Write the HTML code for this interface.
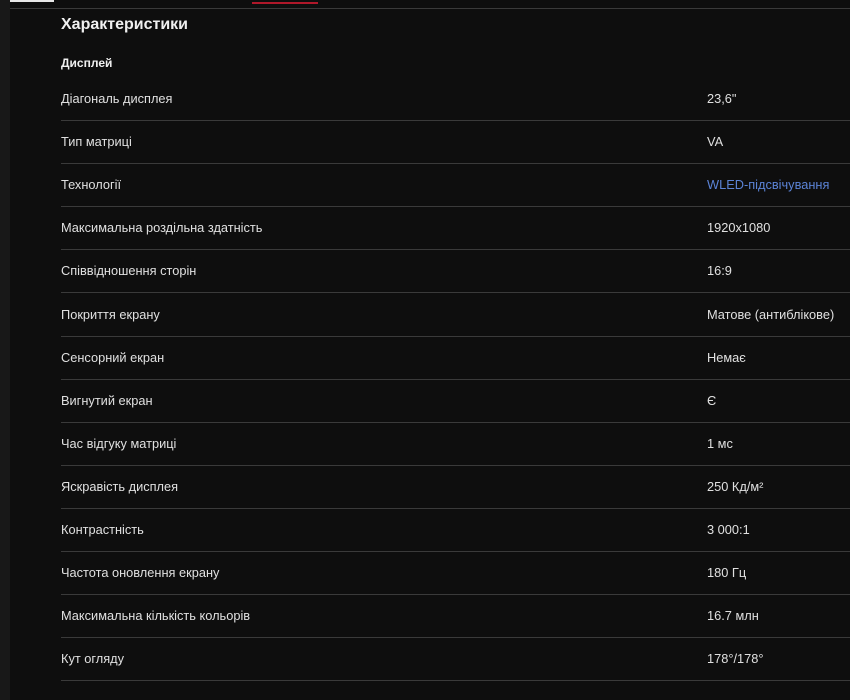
<!DOCTYPE html>
<html><head><meta charset="utf-8"><style>
body{margin:0;width:850px;height:700px;background:#0e0e0e;overflow:hidden;font-family:"Liberation Sans",Arial,sans-serif;color:#e0e0e0;position:relative}
.strip{position:absolute;left:0;top:0;width:10px;height:700px;background:#181818}
.top{position:absolute;left:10px;right:0;top:8px;height:1px;background:#3a3a3a}
.wb{position:absolute;left:10px;top:0;width:44px;height:2px;background:#e8e8e8}
.rb{position:absolute;left:252px;top:2px;width:66px;height:2px;background:#b0182a}
h2{position:absolute;left:61px;top:16px;margin:0;font-size:16px;font-weight:bold;color:#f0f0f0}
.sub{position:absolute;left:61px;top:56px;font-size:12px;font-weight:bold;color:#f0f0f0}
.row{position:absolute;left:61px;right:0;height:43px;border-bottom:1px solid #3a3a3a;font-size:12.8px}
.row span{position:absolute;top:14px}
.row .v{left:646px}
a{color:#5b83d6;text-decoration:none}
</style></head><body>
<div class="strip"></div><div class="top"></div><div class="wb"></div><div class="rb"></div>
<h2>Характеристики</h2>
<div class="sub">Дисплей</div>
<div class="row" style="top:77px"><span>Діагональ дисплея</span><span class="v">23,6"</span></div>
<div class="row" style="top:120px"><span>Тип матриці</span><span class="v">VA</span></div>
<div class="row" style="top:163px"><span>Технології</span><span class="v"><a>WLED-підсвічування</a></span></div>
<div class="row" style="top:206px"><span>Максимальна роздільна здатність</span><span class="v">1920x1080</span></div>
<div class="row" style="top:249px"><span>Співвідношення сторін</span><span class="v">16:9</span></div>
<div class="row" style="top:293px"><span>Покриття екрану</span><span class="v">Матове (антиблікове)</span></div>
<div class="row" style="top:336px"><span>Сенсорний екран</span><span class="v">Немає</span></div>
<div class="row" style="top:379px"><span>Вигнутий екран</span><span class="v">Є</span></div>
<div class="row" style="top:422px"><span>Час відгуку матриці</span><span class="v">1 мс</span></div>
<div class="row" style="top:465px"><span>Яскравість дисплея</span><span class="v">250 Кд/м²</span></div>
<div class="row" style="top:508px"><span>Контрастність</span><span class="v">3 000:1</span></div>
<div class="row" style="top:551px"><span>Частота оновлення екрану</span><span class="v">180 Гц</span></div>
<div class="row" style="top:594px"><span>Максимальна кількість кольорів</span><span class="v">16.7 млн</span></div>
<div class="row" style="top:637px"><span>Кут огляду</span><span class="v">178°/178°</span></div>
</body></html>
